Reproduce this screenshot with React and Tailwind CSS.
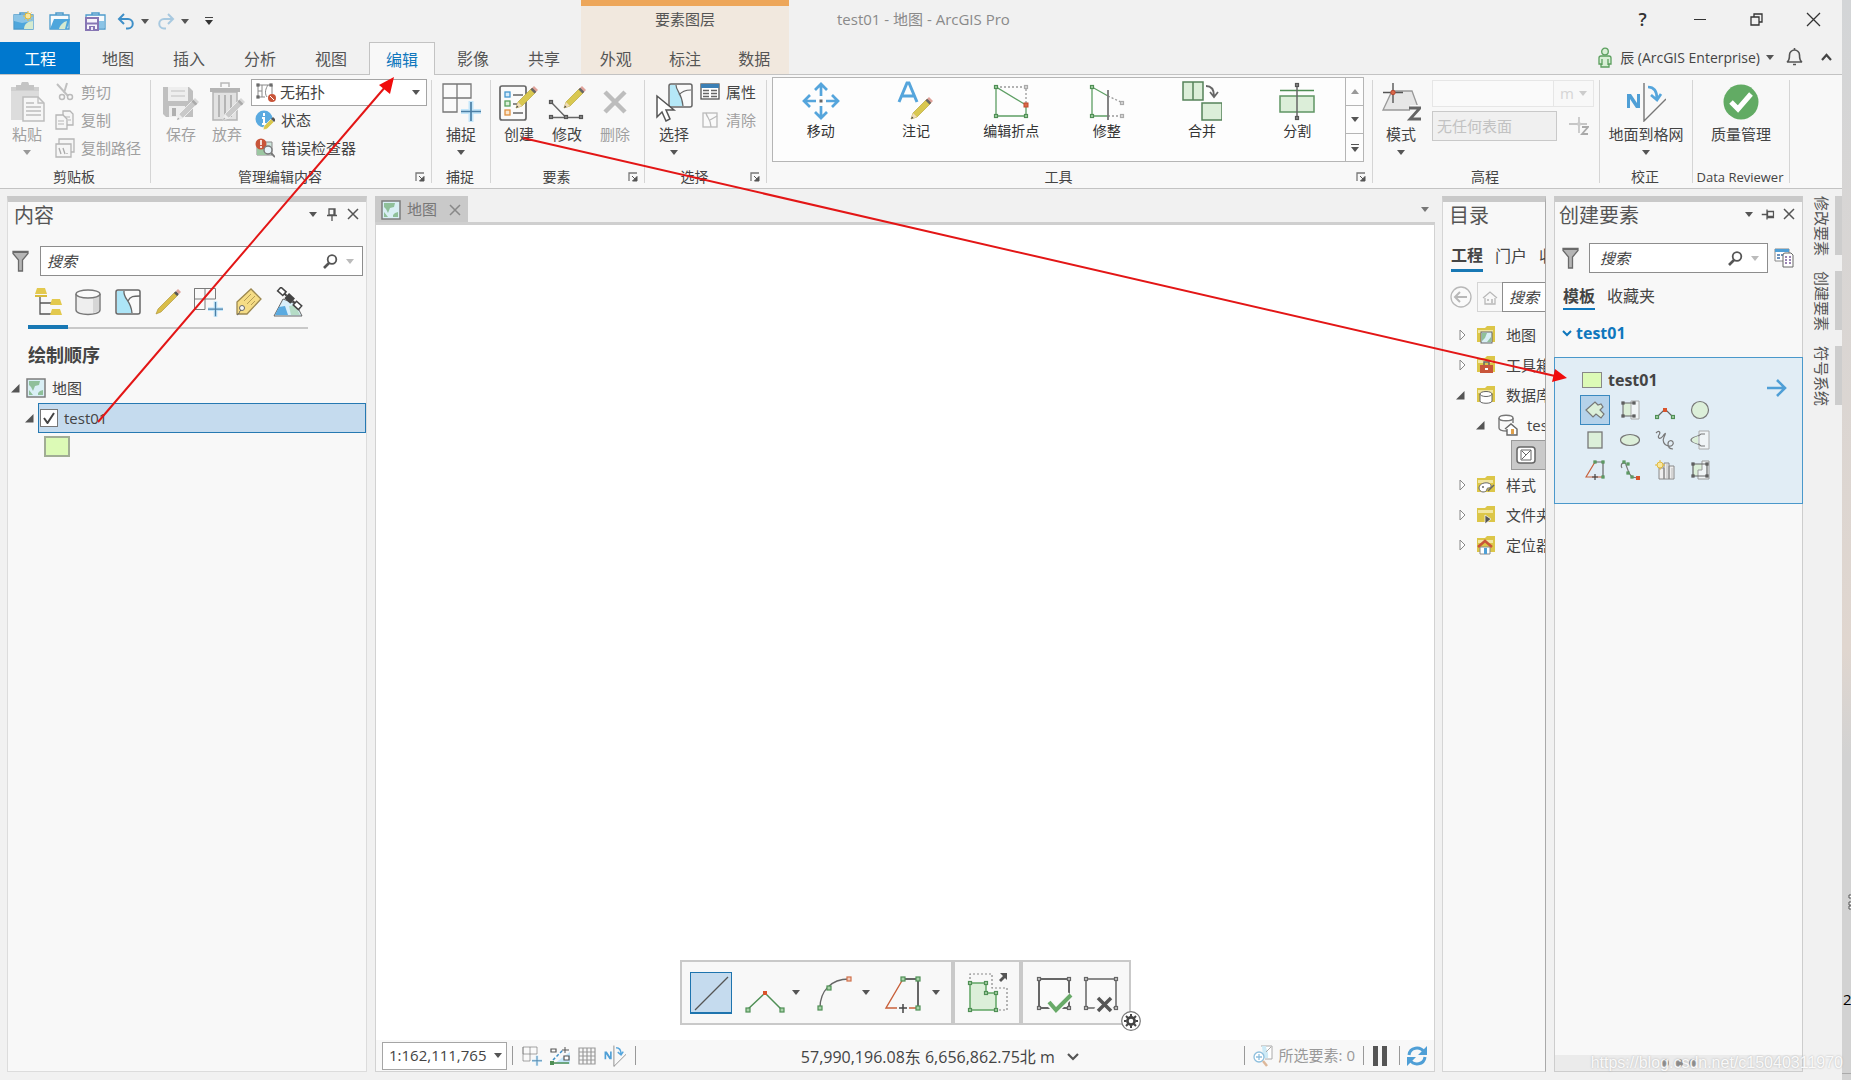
import { useState } from 'react'

// ---------- small shared glyphs ----------

function Caret({ color = '#555' }) {
  return (
    <svg width="8" height="5" viewBox="0 0 8 5" className="shrink-0">
      <path d="M0 0h8L4 5z" fill={color} />
    </svg>
  )
}

function CloseIcon({ size = 12, color = '#555' }) {
  return (
    <svg width={size} height={size} viewBox="0 0 12 12" className="shrink-0">
      <path d="M1 1l10 10M11 1L1 11" stroke={color} strokeWidth="1.500" fill="none" />
    </svg>
  )
}

function PinIcon({ sideways }) {
  return (
    <svg width="12" height="13" viewBox="0 0 12 13" className={sideways ? 'rotate-90' : ''}>
      <path d="M3 1h6v6H3zM8 1v6M1 7.500h10M6 8v5" stroke="#555" strokeWidth="1.300" fill="none" />
    </svg>
  )
}

function FilterIcon() {
  return (
    <svg width="17" height="22" viewBox="0 0 17 22" className="shrink-0">
      <path d="M1 1.500h15v2L10.500 10v11H6.500V10L1 3.500z" fill="#b5b5b5" stroke="#6a6a6a" strokeWidth="1.300" />
      <path d="M1 2h15" stroke="#6a6a6a" strokeWidth="2" />
    </svg>
  )
}

function SearchIcon() {
  return (
    <svg width="15" height="15" viewBox="0 0 15 15" className="shrink-0">
      <circle cx="9" cy="5.500" r="4.300" fill="none" stroke="#555" strokeWidth="1.800" />
      <path d="M6 9l-5 5" stroke="#555" strokeWidth="2.600" />
    </svg>
  )
}

function Launcher() {
  return (
    <button aria-label="对话框" className="shrink-0">
      <svg width="10" height="10" viewBox="0 0 10 10">
        <path d="M1 9V1h8" stroke="#777" strokeWidth="1.300" fill="none" />
        <path d="M4 4l4 4M9 4.500V9H4.500z" stroke="#555" fill="#555" strokeWidth="1" />
      </svg>
    </button>
  )
}

function Pencil({ x = 0, y = 0, gray }) {
  return (
    <g transform={`translate(${x} ${y})`}>
      <path d="M2 18L16 4l4 4L6 22l-6 2z" fill={gray ? '#c9c9c9' : '#d9c850'} stroke={gray ? '#f8f8f8' : '#b9a83c'} strokeWidth="0.700" />
      <path d="M15 5l3-3 4 4-3 3z" fill={gray ? '#d8d8d8' : '#e0a29a'} />
      <path d="M14.500 5.500l1.800-1.800 4 4-1.800 1.800z" fill={gray ? '#aaa' : '#666'} />
      <path d="M2 18l4 4-6 2z" fill={gray ? '#eee' : '#f0dcb8'} />
      <path d="M0 24l2.500-1-1.500-1.500z" fill={gray ? '#aaa' : '#444'} />
    </g>
  )
}

function Dots({ points, color = '#4f8f55', fill = '#a9d3a9', size = 4 }) {
  return points.map(([x, y]) => (
    <rect key={`${x}-${y}`} x={x - size / 2} y={y - size / 2} width={size} height={size} fill={fill} stroke={color} strokeWidth="1.200" />
  ))
}

function MapIcon() {
  return (
    <svg width="20" height="20" viewBox="0 0 20 20" className="shrink-0">
      <rect x="1" y="1" width="18" height="18" fill="#d9eff5" stroke="#7c7c7c" strokeWidth="1.500" />
      <path d="M3 3h11l-1 4-4 1-2 5-2-4-2-2z" fill="#8fc09a" />
      <path d="M3 12l4 5H3zM12 15l2-2 3-1v5h-5z" fill="#8fc09a" />
    </svg>
  )
}

// ---------- quick access bar ----------

function ProjectIcon({ kind }) {
  return (
    <svg width="22" height="20" viewBox="0 0 22 20">
      <path d="M7 4V2h7v2" fill="none" stroke="#4c9bcb" strokeWidth="1.500" />
      <path d="M1 4h19v14H1z" fill={kind === 'new' ? '#4ea6dc' : '#f7fafc'} stroke="#4c9bcb" strokeWidth="1.300" />
      {kind === 'new' && (
        <>
          <path d="M1 4h19v6L9 12 1 10z" fill="#8bc4e6" />
          <path d="M11 18c0-5 4-8 9-8v8z" fill="#d5ead0" />
          <circle cx="15" cy="5" r="3" fill="#f8e7a0" stroke="#e2b93c" />
          <path d="M15 0v1.500M15 8.500V10M10 5h1.500M18.500 5H20M11.500 1.500l1 1M18.500 1.500l-1 1M11.500 8.500l1-1M18.500 8.500l-1-1" stroke="#e2b93c" />
        </>
      )}
      {kind === 'open' && (
        <>
          <path d="M1 18L5 8h16l-3 10z" fill="#4ea6dc" />
          <path d="M10 18c1-4 4-7 8-8l-2 8z" fill="#d5ead0" />
        </>
      )}
      {kind === 'save' && (
        <>
          <path d="M13 10h6v7h-6z" fill="#8bc4e6" />
          <path d="M1 7h12v12H1z" fill="#f7f5fb" stroke="#8776b4" strokeWidth="2" />
          <path d="M1 12.500h12" stroke="#8776b4" strokeWidth="2" />
          <path d="M4 15h6v4H4z" fill="#8776b4" />
          <path d="M6 16h2v3H6z" fill="#efeaf7" />
        </>
      )}
    </svg>
  )
}

function UndoIcon({ flip }) {
  return (
    <svg width="18" height="17" viewBox="0 0 18 17" className={flip ? '-scale-x-100 opacity-40' : ''}>
      <path d="M7 1L2 6l5 5M2.500 6H11a4.500 4.500 0 0 1 0 9.500H9" fill="none" stroke="#3e8fc8" strokeWidth="2" />
    </svg>
  )
}

// ---------- ribbon icons ----------

const big = { width: 40, height: 40, viewBox: '0 0 40 40' }
const small = { width: 20, height: 20, viewBox: '0 0 20 20' }

function PasteIcon() {
  return (
    <svg {...big}>
      <path d="M4 5h28v33H4z" fill="#dcdcdc" />
      <path d="M4 5h28v4H4z" fill="#cfcfcf" />
      <path d="M9 3h5a4 4 0 0 1 8 0h5v5H9z" fill="#c4c4c4" />
      <path d="M16 15h15l6 6v18H16z" fill="#f6f6f6" stroke="#bdbdbd" strokeWidth="1.500" />
      <path d="M31 15v6h6M19 21h8M19 25h15M19 29h15M19 33h15" fill="none" stroke="#bdbdbd" strokeWidth="1.300" />
    </svg>
  )
}

function SaveEditsIcon() {
  return (
    <svg {...big}>
      <path d="M2 5h26l4 4v26H5l-3-3z" fill="#c0c0c0" />
      <path d="M7 5h20v14H7z" fill="#eee" />
      <path d="M10 9h14M10 14h14" stroke="#d0d0d0" strokeWidth="1.500" />
      <path d="M8 24h16v11H8z" fill="#eee" />
      <path d="M11 26h4v8h-4z" fill="#b0b0b0" />
      <Pencil x={16} y={14} gray />
    </svg>
  )
}

function DiscardIcon() {
  return (
    <svg {...big}>
      <path d="M14 5V1h8v4" fill="none" stroke="#b8b8b8" strokeWidth="1.500" />
      <path d="M3 6h30v4H3z" fill="#b4b4b4" />
      <path d="M6 10h24v28H6z" fill="#e2e2e2" stroke="#b4b4b4" strokeWidth="1.500" />
      <path d="M12 13v22M18 13v22M24 13v22" stroke="#b5b5b5" strokeWidth="2" />
      <Pencil x={16} y={14} gray />
    </svg>
  )
}

function SnapIcon({ size = 40 }) {
  return (
    <svg width={size} height={size} viewBox="0 0 40 40">
      <path d="M2 2h28v14H2zM16 2v28H2V2" fill="#fafafa" stroke="#777" strokeWidth="1.300" />
      <path d="M30 19v21M20 29.500h20" stroke="#c4e6fa" strokeWidth="5" />
      <path d="M30 20v19M20 29.500h20" stroke="#4b7fa5" strokeWidth="1.700" />
    </svg>
  )
}

function CreateIcon() {
  return (
    <svg {...big}>
      <rect x="1" y="4" width="26" height="34" rx="2" fill="#fafafa" stroke="#666" strokeWidth="1.700" />
      <rect x="6" y="10" width="5" height="5" fill="#d6ecfa" stroke="#4597cf" strokeWidth="1.300" />
      <rect x="6" y="19" width="5" height="5" fill="#dcf0d8" stroke="#58a05c" strokeWidth="1.300" />
      <rect x="6" y="28" width="5" height="5" fill="#fbe6cc" stroke="#df9140" strokeWidth="1.300" />
      <path d="M14 13h10M14 22h10M14 31h10" stroke="#666" strokeWidth="1.300" />
      <Pencil x={17} y={2} />
    </svg>
  )
}

function ModifyIcon() {
  return (
    <svg {...big}>
      <path d="M4 20l15 15.500M4 35.500h31" stroke="#666" strokeWidth="1.400" fill="none" />
      <Dots points={[[4, 20], [4, 35], [19, 35], [34, 35]]} color="#555" fill="#888" size={3} />
      <Pencil x={17} y={2} />
    </svg>
  )
}

function DeleteIcon() {
  return (
    <svg {...big}>
      <path d="M10 10l20 20M30 10L10 30" stroke="#bdbdbd" strokeWidth="4.500" />
    </svg>
  )
}

function SelectIcon() {
  return (
    <svg {...big}>
      <rect x="15" y="2" width="23" height="23" rx="2" fill="#fafafa" stroke="#666" strokeWidth="1.500" />
      <path d="M16 3h6c0 6 6 8 7 21H16z" fill="#b5e8f7" />
      <path d="M22 3c0 6 6 8 7 21M25 13c3-4 7-5 12-5" fill="none" stroke="#666" strokeWidth="1.200" />
      <path d="M3 14v21l5-5 4 9 4-2-4-9h8z" fill="#fff" stroke="#555" strokeWidth="1.500" />
    </svg>
  )
}

function MoveIcon() {
  return (
    <svg {...big}>
      <g fill="none" stroke="#55a5dc" strokeWidth="2.700">
        <path d="M20 3v12M14 9l6-6 6 6M20 25v12M14 31l6 6 6-6M3 20h12M9 14l-6 6 6 6M25 20h12M31 14l6 6-6 6" />
      </g>
      <rect x="18.500" y="18.500" width="3" height="3" fill="#666" />
    </svg>
  )
}

function AnnotationIcon() {
  return (
    <svg {...big}>
      <path d="M3 21L11 2h2l8 19M6 15h12" fill="none" stroke="#55a5dc" strokeWidth="3" />
      <Pencil x={15} y={14} />
    </svg>
  )
}

function EditVerticesIcon() {
  return (
    <svg {...big}>
      <path d="M5 6h30v18" fill="none" stroke="#999" strokeWidth="1.300" strokeDasharray="2 2" />
      <path d="M5 6v29h30V24z" fill="none" stroke="#5e9f64" strokeWidth="1.300" />
      <Dots points={[[5, 6], [5, 35], [35, 35]]} size={3} />
      <Dots points={[[35, 6]]} color="#aaa" fill="#ddd" size={3} />
      <rect x="33" y="22" width="4" height="4" fill="#d9684a" stroke="#c24a2c" />
    </svg>
  )
}

function TrimIcon() {
  return (
    <svg {...big}>
      <path d="M21 15l15 7M21 35h14" stroke="#999" strokeWidth="1.300" strokeDasharray="2 2" />
      <path d="M21 35H5V6l16 9" fill="none" stroke="#5e9f64" strokeWidth="1.300" />
      <path d="M21 9v30" stroke="#777" strokeWidth="1.800" />
      <Dots points={[[5, 6], [5, 35]]} size={3} />
      <Dots points={[[35, 22], [35, 35]]} color="#aaa" fill="#ddd" size={3} />
    </svg>
  )
}

function MergeIcon() {
  return (
    <svg {...big}>
      <path d="M1 1h20v18H1zM11 1v18M20 22h20v17H20z" fill="#dceed9" stroke="#55835a" strokeWidth="1.500" />
      <path d="M24 5c6 0 8 4 8 10M28 11l4 5 4-5" fill="none" stroke="#666" strokeWidth="1.800" />
    </svg>
  )
}

function SplitIcon() {
  return (
    <svg {...big}>
      <path d="M3 9.500h34" stroke="#4f8f55" strokeWidth="1.500" />
      <rect x="3" y="15" width="34" height="16" fill="#dceed9" stroke="#5f9563" strokeWidth="1.500" />
      <path d="M20 4v34" stroke="#666" strokeWidth="1.500" />
      <Dots points={[[20, 4], [20, 37]]} color="#555" fill="#888" size={3} />
    </svg>
  )
}

function ModeIcon() {
  return (
    <svg {...big}>
      <path d="M11 9h20l7 19H2z" fill="#e6e6e6" stroke="#999" strokeWidth="1.300" />
      <path d="M12 1v20M2 10.500h20" stroke="#555" strokeWidth="1.400" />
      <circle cx="12" cy="10.500" r="2.200" fill="#d9684a" stroke="#b84830" />
      <path d="M29 26h10L30 37h10" fill="none" stroke="#f8f8f8" strokeWidth="6" />
      <path d="M28 26h11L29 37h11" fill="none" stroke="#666" strokeWidth="2.800" />
    </svg>
  )
}

function GridIcon({ size = 40 }) {
  return (
    <svg width={size} height={size} viewBox="0 0 40 40">
      <path d="M1 26V12h4l6 9v-9h3v14h-4l-6-9v9z" fill="#4f9fd6" />
      <path d="M18 1v38l22-22" fill="none" stroke="#777" strokeWidth="1.400" />
      <path d="M22 5c7 0 9 5 9 12M25 13l6 5 4-6" fill="none" stroke="#55a5dc" strokeWidth="2.700" />
    </svg>
  )
}

function QualityIcon() {
  return (
    <svg {...big}>
      <circle cx="20" cy="20" r="17.500" fill="#62ab64" />
      <path d="M10 20l7 7 13-15" fill="none" stroke="#fff" strokeWidth="5" />
    </svg>
  )
}

function CutIcon() {
  return (
    <svg {...small}>
      <path d="M2 2l11 12M12 1L9 11" stroke="#c0c0c0" strokeWidth="2" />
      <circle cx="7" cy="15" r="2.500" fill="none" stroke="#bbb" strokeWidth="1.500" />
      <circle cx="15" cy="15" r="2.500" fill="none" stroke="#bbb" strokeWidth="1.500" />
    </svg>
  )
}

function CopyIcon() {
  return (
    <svg {...small}>
      <path d="M8 1h7l3 3v11H8z" fill="#f6f6f6" stroke="#b5b5b5" strokeWidth="1.300" />
      <path d="M1 5h7l4 4v10H1z" fill="#f6f6f6" stroke="#b5b5b5" strokeWidth="1.300" />
      <path d="M3 11h6M3 14h6M10 7h5M13 10h3" stroke="#b5b5b5" />
    </svg>
  )
}

function CopyPathIcon() {
  return (
    <svg {...small}>
      <path d="M4 1h15v13H4z" fill="#f6f6f6" stroke="#b5b5b5" strokeWidth="1.300" />
      <path d="M1 6h15v13H1z" fill="#f6f6f6" stroke="#b5b5b5" strokeWidth="1.300" />
      <path d="M4 10l2 6M8 10l2 6M12 15v1" stroke="#aaa" strokeWidth="1.300" />
    </svg>
  )
}

function TopologyIcon() {
  return (
    <svg {...small}>
      <path d="M2 2h14v9M2 2v12h7M2 8h4V2M6 8v6M11 14c-3-4-1-9 1-12" fill="none" stroke="#888" />
      <Dots points={[[2, 2], [15, 2], [2, 14]]} color="#666" fill="#888" size={2} />
      <circle cx="16" cy="15" r="4" fill="#c8553a" />
      <path d="M14 13l4 4" stroke="#fff" />
    </svg>
  )
}

function StatusIcon() {
  return (
    <svg {...small}>
      <circle cx="9" cy="9" r="8.500" fill="#5aaae0" />
      <path d="M9 3v3M7 8h2v6M7 14h4" stroke="#fff" strokeWidth="2" fill="none" />
      <path d="M9 16l7-7 3 3-7 7-4 1z" fill="#d9c850" stroke="#fff" strokeWidth="0.600" />
      <path d="M16 9l2-2 3 3-2 2z" fill="#555" />
    </svg>
  )
}

function ErrorInspectorIcon() {
  return (
    <svg {...small}>
      <path d="M2 4h15v13H2z" fill="#cfe6dc" stroke="#888" />
      <path d="M2 10h6l3 7H2z" fill="#9cc7a2" />
      <circle cx="6" cy="6" r="5.500" fill="#c8553a" />
      <path d="M6 2v5M6 8v2" stroke="#fff" strokeWidth="1.600" />
      <circle cx="13" cy="12" r="4" fill="#e9f4fa" stroke="#777" strokeWidth="1.400" />
      <path d="M16 15l4 4" stroke="#777" strokeWidth="1.800" />
    </svg>
  )
}

function AttributesIcon() {
  return (
    <svg {...small}>
      <rect x="1" y="2" width="18" height="15" fill="#fff" stroke="#555" strokeWidth="1.300" />
      <path d="M1 2h18v4H1z" fill="#3b7fb5" />
      <path d="M3 8.500h6M11 8.500h6M3 11.500h6M11 11.500h6M3 14.500h6M11 14.500h6" stroke="#666" strokeWidth="1.500" />
    </svg>
  )
}

function ClearIcon() {
  return (
    <svg {...small}>
      <rect x="3" y="3" width="14" height="14" fill="#fafafa" stroke="#bbb" strokeWidth="1.300" />
      <path d="M6 3c1 5 5 6 5 14M10 10l7-4" fill="none" stroke="#bbb" strokeWidth="1.300" />
    </svg>
  )
}

// ---------- ribbon ----------

function BigButton({ icon, label, width = 'w-10', disabled, menu }) {
  return (
    <button disabled={disabled} className={`${width} shrink-0 flex flex-col items-center`}>
      {icon}
      <span className={`text-[15px] leading-5 mt-0.5 whitespace-nowrap ${disabled ? 'text-[#a0a0a0]' : 'text-[#444]'}`}>{label}</span>
      {menu && <span className="mt-1.5"><Caret color={disabled ? '#999' : '#555'} /></span>}
    </button>
  )
}

function SmallButton({ icon, label, disabled }) {
  return (
    <button disabled={disabled} className={`flex items-center gap-1.5 h-7 text-[15px] whitespace-nowrap ${disabled ? 'text-[#a0a0a0]' : 'text-[#444]'}`}>
      {icon}
      <span>{label}</span>
    </button>
  )
}

function Group({ label, width, launcher, labelSize = 'text-[14px]', children }) {
  return (
    <section className={`${width} shrink-0 h-[103px] mt-[5px] border-r border-[#d5d5d5] flex flex-col justify-between`}>
      <div className="flex">{children}</div>
      <div className={`flex items-center gap-1.5 h-[22px] -mb-1.5 pb-0.5 ${launcher ? 'pr-1.5' : 'pr-0.5'}`}>
        <h2 className={`flex-1 text-center ${labelSize} whitespace-nowrap text-[#444] leading-5`}>{label}</h2>
        {launcher && <Launcher />}
      </div>
    </section>
  )
}

const galleryTools = [
  ['移动', MoveIcon],
  ['注记', AnnotationIcon],
  ['编辑折点', EditVerticesIcon],
  ['修整', TrimIcon],
  ['合并', MergeIcon],
  ['分割', SplitIcon],
]

function Ribbon() {
  return (
    <div className="h-[114px] shrink-0 flex bg-[#f8f8f8] border-b border-[#c3c3c3] overflow-hidden">
      <Group label="剪贴板" width="w-[151px]">
        <div className="flex pl-[7px] gap-2">
          <div className="pt-0.5"><BigButton icon={<PasteIcon />} label="粘贴" disabled menu /></div>
          <div className="-mt-0.5">
            <SmallButton icon={<CutIcon />} label="剪切" disabled />
            <SmallButton icon={<CopyIcon />} label="复制" disabled />
            <SmallButton icon={<CopyPathIcon />} label="复制路径" disabled />
          </div>
        </div>
      </Group>

      <Group label="管理编辑内容" width="w-[281px]" launcher>
        <div className="flex pl-2.5 gap-1.5 pt-0.5">
          <BigButton icon={<SaveEditsIcon />} label="保存" disabled />
          <BigButton icon={<DiscardIcon />} label="放弃" disabled />
        </div>
        <div className="flex-1 -mt-px ml-1 mr-1">
          <div className="h-[27px] flex items-center gap-1 pl-1 pr-1.5 bg-white border border-[#a5a5a5]">
            <TopologyIcon />
            <select aria-label="拓扑" className="flex-1 appearance-none bg-transparent text-[15px] text-[#444] outline-none">
              <option>无拓扑</option>
            </select>
            <Caret />
          </div>
          <div className="pl-1">
            <SmallButton icon={<StatusIcon />} label="状态" />
            <SmallButton icon={<ErrorInspectorIcon />} label="错误检查器" />
          </div>
        </div>
      </Group>

      <Group label="捕捉" width="w-[59px]">
        <div className="pl-[9px] pt-0.5"><BigButton icon={<SnapIcon />} label="捕捉" menu /></div>
      </Group>

      <Group label="要素" width="w-[154px]" launcher>
        <div className="flex pl-2 gap-2 pt-0.5">
          <BigButton icon={<CreateIcon />} label="创建" />
          <BigButton icon={<ModifyIcon />} label="修改" />
          <BigButton icon={<DeleteIcon />} label="删除" disabled />
        </div>
      </Group>

      <Group label="选择" width="w-[122px]" launcher>
        <div className="pl-[9px] pt-0.5"><BigButton icon={<SelectIcon />} label="选择" menu /></div>
        <div className="-mt-0.5 pl-1.5">
          <SmallButton icon={<AttributesIcon />} label="属性" />
          <SmallButton icon={<ClearIcon />} label="清除" disabled />
        </div>
      </Group>

      <Group label="工具" width="w-[606px]" launcher>
        <div className="-mt-[3px] ml-[5px] w-[592px] h-[85px] flex border border-[#b5b5b5] bg-[#fdfdfd]">
          <div className="flex-1 grid grid-cols-6">
            {galleryTools.map(([name, ToolIcon]) => (
              <button key={name} className="flex flex-col items-center pt-[3px]">
                <ToolIcon />
                <span className="text-[14px] leading-5 text-[#333]">{name}</span>
              </button>
            ))}
          </div>
          <div className="w-[18px] flex flex-col border-l border-[#b5b5b5] divide-y divide-[#b5b5b5]">
            <button aria-label="上一行" className="flex-1 flex items-center justify-center"><span className="rotate-180 flex"><Caret color="#999" /></span></button>
            <button aria-label="下一行" className="flex-1 flex items-center justify-center"><Caret /></button>
            <button aria-label="更多工具" className="flex-1 flex flex-col gap-0.5 items-center justify-center">
              <span className="w-2 h-px bg-[#555]" />
              <Caret />
            </button>
          </div>
        </div>
      </Group>

      <Group label="高程" width="w-[227px]">
        <div className="pl-2 pt-0.5"><BigButton icon={<ModeIcon />} label="模式" menu /></div>
        <div className="pl-[11px] flex flex-col gap-1">
          <div className="flex h-[27px] w-[162px] border border-[#e6e6e6]">
            <input aria-label="高程值" disabled className="w-[121px] bg-[#fafafa] border-r border-[#e6e6e6]" />
            <select aria-label="单位" disabled className="flex-1 appearance-none pl-1.5 text-[15px] text-[#d5d5d5]">
              <option>m</option>
            </select>
            <span className="flex items-center pr-1.5"><Caret color="#ccc" /></span>
          </div>
          <div className="flex items-center gap-3">
            <select aria-label="高程表面" disabled className="w-[125px] h-[30px] appearance-none border border-[#c9c9c9] bg-[#f0f0f0] pl-1 text-[15px] text-[#c2c2c2]">
              <option>无任何表面</option>
            </select>
            <svg {...small}>
              <path d="M10 1v16M0 8h18" stroke="#b5b5b5" strokeWidth="1.300" />
              <circle cx="10" cy="8" r="2" fill="#ccc" />
              <path d="M13 11h6l-6 7h6" fill="none" stroke="#aaa" strokeWidth="1.800" />
            </svg>
          </div>
        </div>
      </Group>

      <Group label="校正" width="w-[93px]">
        <div className="pt-0.5 flex-1"><BigButton icon={<GridIcon />} label="地面到格网" width="w-full" menu /></div>
      </Group>

      <Group label="Data Reviewer" width="w-[97px]" labelSize="text-[13px]">
        <div className="pt-0.5 flex-1"><BigButton icon={<QualityIcon />} label="质量管理" width="w-full" /></div>
      </Group>
    </div>
  )
}

// ---------- title bar and tabs ----------

const tabs = ['地图', '插入', '分析', '视图', '编辑', '影像', '共享']

function Header() {
  const [active, setActive] = useState('编辑')
  return (
    <header className="h-[75px] shrink-0 flex border-b border-[#c3c3c3] bg-[#f1f1f1]">
      <div className="w-[581px] shrink-0 flex flex-col">
        <div className="h-[42px] flex items-center pl-[13px] gap-3.5">
          <button aria-label="新建工程"><ProjectIcon kind="new" /></button>
          <button aria-label="打开工程"><ProjectIcon kind="open" /></button>
          <button aria-label="保存工程"><ProjectIcon kind="save" /></button>
          <button aria-label="撤消" className="flex items-center gap-1.5 -ml-1"><UndoIcon /><Caret /></button>
          <button aria-label="恢复" className="flex items-center gap-1.5 -ml-1.5"><UndoIcon flip /><Caret /></button>
          <button aria-label="自定义快速访问工具栏" className="ml-0.5 flex flex-col items-center gap-0.5">
            <span className="w-2 h-px bg-[#444]" />
            <Caret color="#333" />
          </button>
        </div>
        <nav className="h-8 flex gap-[5px] text-[16px] text-[#555]">
          <button className="w-[80px] pt-0.5 bg-[#0078ce] text-white">工程</button>
          {tabs.map(tab => (
            <button
              key={tab}
              onClick={() => setActive(tab)}
              className={`w-[66px] pt-0.5 ${tab === active ? 'h-[33px] bg-[#f8f8f8] border border-b-0 border-[#c3c3c3] text-[#0f77bd]' : ''}`}
            >
              {tab}
            </button>
          ))}
        </nav>
      </div>

      <div className="w-[208px] shrink-0 flex flex-col bg-[#f1e8de] border-t-6 border-[#eda659] text-[#555]">
        <p className="h-9 pt-0.5 text-center text-[15px]">要素图层</p>
        <div className="h-8 grid grid-cols-3 text-[16px]">
          <button className="pt-0.5">外观</button>
          <button className="pt-0.5">标注</button>
          <button className="pt-0.5">数据</button>
        </div>
      </div>

      <div className="flex-1 flex flex-col">
        <div className="h-[38px] mb-0.5 flex items-center justify-between pl-12">
          <h1 className="text-[15px] text-[#8a8a8a]">test01 - 地图 - ArcGIS Pro</h1>
          <div className="flex items-center text-[#333]">
            <button className="w-[57px] text-[18px] leading-6 font-semibold">?</button>
            <button aria-label="最小化" className="w-[57px] flex justify-center"><span className="w-3 h-px bg-[#333]" /></button>
            <button aria-label="还原" className="w-[57px] flex justify-center">
              <svg width="13" height="13" viewBox="0 0 13 13">
                <path d="M1 4h8v8H1zM4 4V1h8v8H9" fill="none" stroke="#333" strokeWidth="1.300" />
              </svg>
            </button>
            <button aria-label="关闭" className="w-[57px] flex justify-center">
              <svg width="15" height="15" viewBox="0 0 15 15"><path d="M1 1l13 13M14 1L1 14" stroke="#333" strokeWidth="1.300" /></svg>
            </button>
          </div>
        </div>
        <div className="h-[34px] flex items-center justify-end pr-2.5 text-[#444]">
          <svg width="14" height="21" viewBox="0 0 14 21" className="mr-2">
            <circle cx="7" cy="4.500" r="3.300" fill="#d9efd6" stroke="#5b9f5e" strokeWidth="1.300" />
            <path d="M1 11a2 2 0 0 1 2-2h8a2 2 0 0 1 2 2v6h-2v3H3v-3H1zM4 12v6M10 12v6" fill="#d9efd6" stroke="#5b9f5e" strokeWidth="1.300" />
          </svg>
          <button className="flex items-center gap-1.5 text-[14px]">辰 (ArcGIS Enterprise) <Caret /></button>
          <button aria-label="通知" className="ml-3">
            <svg width="17" height="20" viewBox="0 0 17 20">
              <path d="M1 15c2-1 2.500-3 2.500-7a5 5 0 0 1 10 0c0 4 .5 6 2.500 7zM7 17.500h3M8.500 1v2" fill="none" stroke="#555" strokeWidth="1.600" />
            </svg>
          </button>
          <button aria-label="折叠功能区" className="ml-[18px]">
            <svg width="11" height="8" viewBox="0 0 11 8"><path d="M1 7l4.500-5L10 7" fill="none" stroke="#444" strokeWidth="2.200" /></svg>
          </button>
        </div>
      </div>
    </header>
  )
}

// ---------- contents pane ----------

function SearchBox({ label, inset = 'pl-1.5' }) {
  return (
    <label className="min-w-0 flex-1 h-[30px] flex items-center gap-2 pr-2 bg-white border border-[#8d8d8d]">
      <input aria-label={label} placeholder="搜索" className={`min-w-0 flex-1 ${inset} text-[15px] italic placeholder-[#444] outline-none`} />
      <SearchIcon />
      <Caret color="#bbb" />
    </label>
  )
}

function PaneControls({ sideways }) {
  return (
    <div className="flex items-center gap-[9px] pb-1">
      <button aria-label="窗格菜单"><Caret /></button>
      <button aria-label="自动隐藏"><PinIcon sideways={sideways} /></button>
      <button aria-label="关闭窗格"><CloseIcon /></button>
    </div>
  )
}

function Expanded() {
  return (
    <svg width="9" height="9" viewBox="0 0 9 9" className="shrink-0"><path d="M8.500 0v8.500H0z" fill="#555" /></svg>
  )
}

function Collapsed() {
  return (
    <svg width="8" height="12" viewBox="0 0 8 12" className="shrink-0"><path d="M1 1l5 5-5 5z" fill="#fff" stroke="#888" /></svg>
  )
}

const listIcons = [
  ['按绘制顺序列出', (
    <svg width="30" height="30" viewBox="0 0 30 30">
      <path d="M7 9v18h12M7 16h12" fill="none" stroke="#555" strokeWidth="1.300" />
      <path d="M4 1h8l2 6H2zM19 12h8l2 6H17zM19 22h8l2 6H17z" fill="#e3c94e" />
      <path d="M2 8h12v2H2z" fill="#d8bb3c" />
    </svg>
  )],
  ['按数据源列出', (
    <svg width="30" height="30" viewBox="0 0 30 30">
      <path d="M3 7v16c0 6 24 6 24 0V7" fill="#eee" stroke="#777" strokeWidth="1.400" />
      <path d="M20 9h6v15l-6 2z" fill="#d6d6d6" />
      <ellipse cx="15" cy="7" rx="12" ry="4" fill="#fafafa" stroke="#777" strokeWidth="1.400" />
    </svg>
  )],
  ['按选择列出', (
    <svg width="30" height="30" viewBox="0 0 30 30">
      <rect x="3" y="3" width="24" height="24" rx="2" fill="#fafafa" stroke="#666" strokeWidth="1.500" />
      <path d="M4 4h7c-1 8 7 9 8 22H4z" fill="#ade5f7" />
      <path d="M11 4c-1 8 7 9 8 22M15 14c2-5 6-5 12-5" fill="none" stroke="#666" strokeWidth="1.300" />
    </svg>
  )],
  ['按编辑列出', (
    <svg width="30" height="30" viewBox="0 0 30 30">
      <path d="M5 22L22 5l3 3L8 25l-5 2z" fill="#d9bd48" stroke="#a98f30" strokeWidth="0.600" />
      <path d="M21 6l2-2 3 3-2 2z" fill="#555" />
      <path d="M23 4l2-2 3 3-2 2z" fill="#e0a29a" />
    </svg>
  )],
  ['按捕捉列出', <SnapIcon size={30} />],
  ['按标注列出', (
    <svg width="30" height="30" viewBox="0 0 30 30">
      <path d="M4 15L18 2l10 10-14 15H4z" fill="#f5dc85" stroke="#9c8850" strokeWidth="1.300" />
      <path d="M11 14l7-7M14 17l8-8M18 18l4-4" stroke="#b59d56" />
      <circle cx="9" cy="21" r="2.500" fill="#f8f8f8" stroke="#666" />
      <path d="M8 23c-2 1-1 4-4 5" fill="none" stroke="#666" />
    </svg>
  )],
  ['按感知影像列出', (
    <svg width="30" height="30" viewBox="0 0 30 30">
      <path d="M10 12L1 29h28l-6-12z" fill="#d9effa" stroke="#666" />
      <path d="M6 20l6-1 3 9H2z" fill="#5aaae0" />
      <path d="M16 19l6-1 5 10h-9z" fill="#b5dcc6" />
      <g transform="rotate(42 17 11)">
        <path d="M13 8h8v7h-8z" fill="#444" />
        <path d="M3 9h7v5H3zM24 9h7v5h-7z" fill="#fff" stroke="#444" strokeWidth="1.500" />
        <path d="M10 11.500h3M21 11.500h3" stroke="#444" strokeWidth="2" />
      </g>
    </svg>
  )],
]

function Contents() {
  const [visible, setVisible] = useState(true)
  return (
    <aside className="w-[360px] shrink-0 flex flex-col bg-[#f8f8f8] border border-[#dcdcdc] border-t-6 border-t-[#c9c9c9] text-[#444]">
      <div className="flex items-center justify-between pl-1.5 pr-[7px] h-7">
        <h2 className="text-[20px] leading-7 text-[#555]">内容</h2>
        <PaneControls />
      </div>
      <div className="mt-4 flex items-center pl-1 pr-[3px] gap-[11px]">
        <FilterIcon />
        <SearchBox label="搜索内容" />
      </div>
      <div className="mt-2.5 ml-5 w-[280px] flex">
        {listIcons.map(([name, icon], i) => (
          <button
            key={name}
            aria-label={name}
            className={`w-10 h-[43px] flex justify-center pt-px ${i === 0 ? 'border-b-4 border-[#1878b4]' : 'border-b-2 border-[#c9c9c9]'}`}
          >
            {icon}
          </button>
        ))}
      </div>
      <h3 className="mt-3 ml-5 text-[18px] leading-7 font-bold">绘制顺序</h3>
      <div className="mt-1 h-[30px] flex items-center pl-[3px] gap-1.5 text-[15px]">
        <Expanded />
        <MapIcon />
        <span>地图</span>
      </div>
      <div className="flex items-center pl-[17px] gap-1">
        <Expanded />
        <label className="flex-1 h-[30px] flex items-center gap-1.5 pl-px bg-[#c5dbee] border border-[#2679b2] text-[15px]">
          <input type="checkbox" checked={visible} onChange={e => setVisible(e.target.checked)} className="sr-only" />
          <span className="size-[18px] flex items-center justify-center bg-white border border-[#777]">
            {visible && <svg width="12" height="12" viewBox="0 0 12 12"><path d="M1 6l3.500 5L11 1" fill="none" stroke="#444" strokeWidth="2" /></svg>}
          </span>
          test01
        </label>
      </div>
      <span className="mt-[3px] ml-9 w-[26px] h-[21px] bg-[#dcfab6] border-2 border-[#a1ad95]" />
    </aside>
  )
}

// ---------- map view ----------

function ToolbarDivider() {
  return <span className="w-1 self-stretch bg-[#c9c9c9]" />
}

function EditToolbar() {
  return (
    <div className="relative h-[65px] flex items-center bg-[#f8f8f8] border-2 border-[#c9c9c9]">
      <button aria-label="直线" className="ml-2 size-[42px] bg-[#c5dbee] border border-b-2 border-[#1e74ae]">
        <svg width="40" height="40" viewBox="0 0 40 40"><path d="M4 37L37 4" stroke="#555" strokeWidth="1.300" /></svg>
      </button>
      <button aria-label="直角" className="ml-[13px] flex items-center gap-[7px]">
        <svg width="40" height="40" viewBox="0 0 40 40">
          <path d="M2 37l18-17 17 17" fill="none" stroke="#4f8f55" strokeWidth="1.500" />
          <Dots points={[[3, 37], [37, 37]]} />
          <rect x="18" y="18" width="4" height="4" fill="#d9542c" />
        </svg>
        <Caret />
      </button>
      <button aria-label="弧段" className="ml-3 flex items-center gap-2.5">
        <svg width="40" height="40" viewBox="0 0 40 40">
          <path d="M8 35C8 18 19 6 37 6" fill="none" stroke="#666" strokeWidth="1.400" />
          <Dots points={[[8, 35], [17, 15]]} />
          <Dots points={[[37, 6]]} color="#d0704a" fill="#f3cfc0" />
        </svg>
        <Caret />
      </button>
      <button aria-label="追踪" className="ml-3 flex items-center gap-2.5">
        <svg width="40" height="40" viewBox="0 0 40 40">
          <path d="M21 6h15v29" fill="none" stroke="#666" strokeWidth="2" />
          <path d="M21 6L4 35h32" fill="none" stroke="#c8603a" strokeWidth="1.400" />
          <path d="M15 35h12" stroke="#f8f8f8" strokeWidth="3" />
          <path d="M21 31v9M17 35h8" stroke="#444" strokeWidth="1.500" />
          <Dots points={[[21, 6], [36, 6], [36, 35]]} />
        </svg>
        <Caret />
      </button>
      <span className="w-[11px]" />
      <ToolbarDivider />
      <button aria-label="绝对值" className="mx-[11px]">
        <svg width="42" height="42" viewBox="0 0 42 42">
          <path d="M4 11V2h22v14h15v22h-8" fill="none" stroke="#888" strokeWidth="1.200" strokeDasharray="2 2" />
          <path d="M4 11h16v10h10v17H4z" fill="#dcefd9" stroke="#5fa563" strokeWidth="1.500" />
          <Dots points={[[4, 11], [20, 11], [20, 21], [30, 21], [30, 38], [4, 38]]} size={3} />
          <path d="M34 1h7v7l-2-2-4 4-2-2 4-4z" fill="#555" />
        </svg>
      </button>
      <ToolbarDivider />
      <button aria-label="完成" className="ml-3">
        <svg width="38" height="40" viewBox="0 0 38 40">
          <path d="M4 6h30v29H4z" fill="#fafafa" stroke="#666" strokeWidth="2" />
          <Dots points={[[4, 6], [34, 6], [4, 35], [34, 35]]} color="#666" fill="#ccc" size={3} />
          <path d="M14 30l7 7 15-15" fill="none" stroke="#f8f8f8" strokeWidth="7" />
          <path d="M14 29l7 8 15-15" fill="none" stroke="#68aa68" strokeWidth="4" />
        </svg>
      </button>
      <button aria-label="取消" className="mx-[9px]">
        <svg width="38" height="40" viewBox="0 0 38 40">
          <path d="M4 6h30v29H4z" fill="#fafafa" stroke="#666" strokeWidth="1.500" />
          <Dots points={[[4, 6], [34, 6], [4, 35], [34, 35]]} color="#666" fill="#ccc" size={3} />
          <path d="M15 24l14 14M29 24L15 38" stroke="#f8f8f8" strokeWidth="8" />
          <path d="M16 25l13 13M29 25L16 38" stroke="#555" strokeWidth="3.500" />
        </svg>
      </button>
      <button aria-label="工具条设置" className="absolute -right-3 -bottom-2">
        <svg width="20" height="20" viewBox="0 0 20 20">
          <circle cx="10" cy="10" r="9.300" fill="#fff" stroke="#777" strokeWidth="1.200" />
          <circle cx="10" cy="10" r="3.600" fill="none" stroke="#444" strokeWidth="2.600" />
          <path d="M10 3v2.500M10 14.500V17M3 10h2.500M14.500 10H17M5 5l2 2M13 13l2 2M15 5l-2 2M7 13l-2 2" stroke="#444" strokeWidth="2" />
        </svg>
      </button>
    </div>
  )
}

function Bar() {
  return <span className="w-px h-[19px] bg-[#999]" />
}

function StatusBar() {
  return (
    <footer className="h-[31px] shrink-0 flex items-center justify-between bg-[#f8f8f8] pl-1.5 pr-[7px] text-[#444]">
      <div className="flex items-center">
        <div className="w-[125px] h-7 flex items-center pl-1.5 pr-1 gap-1 bg-white border border-[#a5a5a5] mr-[5px]">
          <select aria-label="比例尺" className="min-w-0 flex-1 appearance-none bg-transparent text-[15px] outline-none overflow-hidden">
            <option>1:162,111,765</option>
          </select>
          <Caret />
        </div>
        <Bar />
        <div className="flex items-center gap-2 px-[9px]">
          <button aria-label="捕捉"><SnapIcon size={20} /></button>
          <button aria-label="约束">
            <svg {...small}>
              <path d="M5 17L20 6v12H3z" fill="#c4e6fa" />
              <path d="M1 3h5v3H1zM14 10h5v4h-5z" fill="#fff" stroke="#555" strokeWidth="1.200" />
              <path d="M3 14L13 4" stroke="#3e8fc8" strokeDasharray="3 2" strokeWidth="1.500" />
              <path d="M15 1v6M12 4h7" stroke="#555" />
              <path d="M2 17h17" stroke="#4f8f55" strokeWidth="1.500" />
              <rect x="0" y="15" width="4" height="4" fill="#4f8f55" />
            </svg>
          </button>
          <button aria-label="格网">
            <svg width="18" height="18" viewBox="0 0 18 18">
              <path d="M1 1h16v16H1zM1 5h16M1 9h16M1 13h16M5 1v16M9 1v16M13 1v16" fill="none" stroke="#999" strokeWidth="1.200" />
            </svg>
          </button>
          <button aria-label="地面到格网校正"><GridIcon size={22} /></button>
        </div>
        <Bar />
      </div>
      <button className="flex items-center gap-3 pt-0.5 text-[16px]">
        57,990,196.08东 6,656,862.75北 m
        <svg width="12" height="8" viewBox="0 0 12 8"><path d="M1 1l5 5 5-5" fill="none" stroke="#555" strokeWidth="2.200" /></svg>
      </button>
      <div className="flex items-center text-[15px] text-[#999]">
        <Bar />
        <svg width="20" height="22" viewBox="0 0 20 22" className="ml-2 mr-1.5">
          <path d="M8 1h11v13h-7" fill="#fff" stroke="#aaa" />
          <path d="M9 1h4c0 4 3 6 2 12h-5z" fill="#cdeaf6" />
          <path d="M13 7l5-5" stroke="#aaa" />
          <circle cx="6" cy="12" r="5" fill="#fff" stroke="#8ebfdd" strokeWidth="1.300" />
          <path d="M6 9v6M3 12h6" stroke="#8ebfdd" strokeWidth="1.300" />
          <path d="M10 16l4 5" stroke="#ddb89a" strokeWidth="2.500" />
        </svg>
        <span className="mr-2">所选要素: 0</span>
        <Bar />
        <button aria-label="暂停绘制" className="ml-[9px] mr-3 flex gap-1">
          <span className="w-[5px] h-5 bg-[#555]" />
          <span className="w-[5px] h-5 bg-[#555]" />
        </button>
        <Bar />
        <button aria-label="刷新" className="ml-[7px]">
          <svg width="20" height="22" viewBox="0 0 20 22">
            <path d="M2 10c1-8 11-9 15-3M18 12c-1 8-11 9-15 3" fill="none" stroke="#4f9fd6" strokeWidth="3" />
            <path d="M20 1v9h-9zM0 21v-9h9z" fill="#4f9fd6" />
          </svg>
        </button>
      </div>
    </footer>
  )
}

function MapView() {
  return (
    <main className="flex-1 min-w-0 flex flex-col">
      <div className="h-[26px] shrink-0 flex items-center justify-between pr-1.5">
        <div className="h-[26px] w-[93px] pt-px flex items-center gap-1.5 pl-1.5 bg-[#c9c9c9] text-[15px] text-[#777]">
          <MapIcon />
          <span className="flex-1">地图</span>
          <button aria-label="关闭地图" className="mr-[7px]"><CloseIcon color="#888" /></button>
        </div>
        <button aria-label="活动视图"><Caret color="#777" /></button>
      </div>
      <div className="flex-1 flex flex-col border border-[#d2d2d2] border-t-3 border-t-[#cfcfcf] bg-white">
        <div className="flex-1 flex items-end justify-center pb-[15px]">
          <EditToolbar />
        </div>
        <StatusBar />
      </div>
    </main>
  )
}

// ---------- catalog pane ----------

function Folder({ children }) {
  return (
    <svg width="20" height="20" viewBox="0 0 20 20" className="shrink-0">
      <path d="M1 3h8l2-2h8v16H1z" fill="#dcc648" />
      <path d="M2 5h15v3H2z" fill="#f1e6a0" />
      {children}
    </svg>
  )
}

const catalogRows = [
  ['地图', <Folder key="m"><rect x="5" y="7" width="11" height="11" fill="#d9eff5" stroke="#666" /><path d="M6 8h5l-2 5-3 3zM11 17l4-5v5z" fill="#8fc09a" /></Folder>],
  ['工具箱', <Folder key="t"><path d="M4 10h13v8H4z" fill="#c8553a" /><path d="M8 10V7h5v3" fill="none" stroke="#666" strokeWidth="1.500" /><path d="M9 13h3v2H9z" fill="#fff" /></Folder>],
  ['数据库', <Folder key="d"><path d="M4 9v7c0 3 12 3 12 0V9" fill="#fff" stroke="#666" /><ellipse cx="10" cy="9" rx="6" ry="2.500" fill="#fff" stroke="#666" /></Folder>],
  ['test01', null],
  ['', null],
  ['样式', <Folder key="s"><path d="M3 13c0-6 12-7 12-2 0 3-4 1-4 3s-2 3-4 3-4-2-4-4z" fill="#fff" stroke="#666" /><path d="M12 16l6-6" stroke="#666" strokeWidth="1.500" /><circle cx="7" cy="12" r="1" fill="#666" /></Folder>],
  ['文件夹', <Folder key="f"><path d="M9 10l6 4-6 5z" fill="#555" stroke="#fff" strokeWidth="0.700" /></Folder>],
  ['定位器', <Folder key="l"><path d="M4 12h10v7H4z" fill="#fff" stroke="#888" /><path d="M2 12l7-6 7 6" fill="none" stroke="#c8553a" strokeWidth="2.500" /><path d="M8 13h3v6H8z" fill="#4f9fd6" /></Folder>],
]

function CatalogRow({ index, name, icon }) {
  if (index === 3) {
    return (
      <li className="h-[30px] flex items-center pl-[33px]">
        <Expanded />
        <svg width="22" height="22" viewBox="0 0 22 22" className="ml-3 mr-2 shrink-0">
          <path d="M2 4v10c0 3 6 3 8 3M16 4v5" fill="none" stroke="#777" strokeWidth="1.400" />
          <ellipse cx="9" cy="4" rx="7" ry="2.800" fill="#fff" stroke="#777" strokeWidth="1.400" />
          <path d="M8 15l6-5 6 5v6H10v-6" fill="#fff" stroke="#666" strokeWidth="1.400" />
          <path d="M14 15h3v5h-3z" fill="#dfa04a" />
        </svg>
        {name}
      </li>
    )
  }
  if (index === 4) {
    return (
      <li className="h-[30px] flex items-center ml-[68px] pl-1 bg-[#c9c9c9] border border-r-0 border-[#999]">
        <svg width="20" height="18" viewBox="0 0 20 18" className="shrink-0">
          <rect x="1" y="1" width="18" height="16" rx="3" fill="#fff" stroke="#666" strokeWidth="1.500" />
          <path d="M5 4h10v10H5zM6 5l4 4 5-5M10 9l-4 4" fill="none" stroke="#666" />
        </svg>
      </li>
    )
  }
  return (
    <li className={`h-[30px] flex items-center ${index === 2 ? 'pl-[13px]' : 'pl-4'}`}>
      <span className={`${index === 2 ? 'w-5' : 'w-[17px]'} shrink-0 flex`}>{index === 2 ? <Expanded /> : <Collapsed />}</span>
      {icon}
      <span className="ml-2.5">{name}</span>
    </li>
  )
}

function Catalog() {
  return (
    <aside className="w-[104px] shrink-0 flex flex-col overflow-hidden whitespace-nowrap bg-[#f8f8f8] border border-[#d5d5d5] border-r-[#aaa] border-t-6 border-t-[#c9c9c9] text-[#444]">
      <h2 className="pl-1.5 text-[20px] leading-7 text-[#555]">目录</h2>
      <div className="mt-[13px] pl-2 flex gap-3 text-[16px] leading-6">
        <button className="shrink-0 h-[29px] pb-[3px] font-bold border-b-3 border-[#1878b4]">工程</button>
        <button className="shrink-0 h-[26px]">门户</button>
        <button className="shrink-0 h-[26px]">收藏夹</button>
      </div>
      <div className="mt-2.5 pl-[7px] flex items-center">
        <button aria-label="后退" className="shrink-0">
          <svg width="22" height="22" viewBox="0 0 22 22">
            <circle cx="11" cy="11" r="10" fill="#fafafa" stroke="#b8b8b8" strokeWidth="1.300" />
            <path d="M17 11H6M10 6l-5 5 5 5" fill="none" stroke="#b8b8b8" strokeWidth="2" />
          </svg>
        </button>
        <button aria-label="主目录" className="ml-[5px] shrink-0 w-[25px] h-[30px] flex items-center justify-center border border-r-0 border-[#d5d5d5]">
          <svg width="16" height="15" viewBox="0 0 16 15">
            <path d="M1 8l7-6 7 6M3 8v6h10V8" fill="none" stroke="#b8b8b8" strokeWidth="1.300" />
            <path d="M5 9h2v2H5zM9 9h2v5H9z" fill="#c5c5c5" />
          </svg>
        </button>
        <input aria-label="搜索工程" placeholder="搜索" className="shrink-0 w-[120px] h-[30px] pl-1.5 bg-white border border-[#8d8d8d] text-[15px] italic placeholder-[#444] outline-none" />
      </div>
      <ul className="mt-2 text-[15px]">
        {catalogRows.map(([name, icon], i) => <CatalogRow key={i} index={i} name={name} icon={icon} />)}
      </ul>
    </aside>
  )
}

// ---------- create features pane ----------

const constructionTools = [
  ['面', <path key="p" d="M1 10l9-8 3 3 3-1 2 3-3 3 4 4-3 4-5-4-3 3z" fill="#dcefd9" stroke="#777" strokeWidth="1.200" />],
  ['自动完成面', <g key="a"><path d="M3 3h10v13H3z" fill="#dcefd9" /><path d="M11 1h8v18h-8z" fill="#f0f4f6" stroke="#aaa" /><path d="M3 3h11M3 16h11M3 3v13" stroke="#666" /><Dots points={[[3, 3], [14, 3], [3, 16], [14, 16]]} color="#555" fill="#999" size={2} /></g>],
  ['直角面', <g key="r"><path d="M2 17l8-8 8 8" fill="none" stroke="#666" strokeWidth="1.200" /><Dots points={[[2, 17], [18, 17]]} size={3} /><rect x="8" y="8" width="4" height="4" fill="#d9542c" /></g>],
  ['圆形', <circle key="c" cx="10" cy="10" r="8.500" fill="#dcefd9" stroke="#777" strokeWidth="1.200" />],
  ['矩形', <rect key="q" x="3" y="2" width="14" height="16" fill="#dcefd9" stroke="#777" strokeWidth="1.300" />],
  ['椭圆', <ellipse key="e" cx="10" cy="10" rx="9.500" ry="5.500" fill="#dcefd9" stroke="#777" strokeWidth="1.200" />],
  ['手绘', <path key="h" d="M1 3c3-3 5-1 3 2s1 5 4 1 3-3 1 1 0 8 4 9 6-2 5-4-5-2-5 2 2 5 5 5" fill="none" stroke="#777" strokeWidth="1.200" />],
  ['自动完成手绘', <g key="af"><path d="M9 1h10v18H9z" fill="#f0f4f6" stroke="#aaa" /><path d="M15 4h-4c-2 3-10 3-10 6s8 3 10 6h4" fill="none" stroke="#777" strokeWidth="1.200" /><path d="M8 6c-3 1-6 2-6 4s3 3 6 4z" fill="#dcefd9" /></g>],
  ['追踪', <g key="tr"><path d="M10 2h8v15" fill="none" stroke="#666" strokeWidth="1.200" /><path d="M10 2L1 17h17" fill="none" stroke="#c8603a" strokeWidth="1.200" /><path d="M10 14v6M7 17h6" stroke="#444" strokeWidth="1.200" /><Dots points={[[10, 2], [18, 2], [18, 17]]} size={2} /></g>],
  ['流', <g key="st"><path d="M2 8c-3-5 4-7 4-3l3 8 3 4 6 1" fill="none" stroke="#777" strokeWidth="1.200" /><Dots points={[[4, 2], [8, 4], [8, 13], [12, 17]]} size={2} /><rect x="16" y="16" width="4" height="4" fill="#d9542c" /></g>],
  ['按属性', <g key="ba"><path d="M4 8h5v11H4zM9 3h5v16H9zM14 6h5v13h-5z" fill="#eee" stroke="#888" /><path d="M12 4v14M17 8v10" stroke="#bbb" /><circle cx="5" cy="5" r="3" fill="#f8e7a0" stroke="#e2b93c" /><path d="M5 0v2M0 5h2M8 5h2M5 8v2" stroke="#e2b93c" /></g>],
  ['边界', <g key="bd"><path d="M3 4h14v12H3z" fill="#dcefd9" /><path d="M12 1h7v18H8v-9h4z" fill="#f0f4f6" stroke="#999" /><path d="M3 4h14v12H3z" fill="none" stroke="#666" strokeWidth="1.200" /><Dots points={[[3, 4], [17, 4], [3, 16], [17, 16]]} color="#555" fill="#999" size={2} /></g>],
]

function CreateFeatures() {
  const [tool, setTool] = useState('面')
  return (
    <aside className="w-[249px] shrink-0 flex flex-col bg-[#f8f8f8] border border-[#cdcdcd] border-t-6 border-t-[#c9c9c9] text-[#444]">
      <div className="h-7 flex items-center justify-between pl-1 pr-[7px]">
        <h2 className="text-[20px] leading-7 text-[#555]">创建要素</h2>
        <PaneControls sideways />
      </div>
      <div className="mt-[13px] flex items-center pl-[7px] pr-2 gap-2.5">
        <FilterIcon />
        <SearchBox label="搜索模板" inset="pl-2.5" />
        <button aria-label="管理模板" className="shrink-0 -ml-1">
          <svg {...small}>
            <path d="M1 1h14v12H1z" fill="#fff" stroke="#888" />
            <path d="M1 1h14v3H1z" fill="#4f9fd6" />
            <path d="M3 7h3M7 7h3M3 10h3" stroke="#3e6fa8" strokeWidth="1.500" />
            <path d="M9 7a2 2 0 0 1 2-2h6l2 2v12H9z" fill="#fff" stroke="#666" />
            <path d="M11 9h2M15 9h2M11 12h2M15 12h2M11 15h2M15 15h2" stroke="#7a5a9a" strokeWidth="1.500" />
          </svg>
        </button>
      </div>
      <div className="mt-2.5 pl-2 flex gap-3 text-[16px] leading-6">
        <button className="h-[27px] font-bold border-b-2 border-[#0f77bd]">模板</button>
        <button className="h-[25px]">收藏夹</button>
      </div>
      <button className="mt-[11px] pl-[7px] flex items-center gap-1 text-[16px] leading-6 font-bold text-[#0f77bd]">
        <svg width="10" height="7" viewBox="0 0 10 7"><path d="M1 1l4 4 4-4" fill="none" stroke="#0f77bd" strokeWidth="2" /></svg>
        test01
      </button>
      <div className="mt-3 h-[147px] -mx-px flex justify-between pl-[25px] pr-[15px] bg-[#e1edf5] border border-[#4a98cb]">
        <div>
          <div className="pt-2.5 pl-0.5 flex items-center gap-1.5 text-[16px] leading-6 font-bold">
            <span className="w-5 h-4 bg-[#dcfab6] border border-[#888]" />
            test01
          </div>
          <div className="mt-[3px] grid grid-cols-4 gap-x-[5px]">
            {constructionTools.map(([name, drawing]) => (
              <button
                key={name}
                aria-label={name}
                onClick={() => setTool(name)}
                className={`size-[30px] flex items-center justify-center border ${name === tool ? 'bg-[#b5d2ea] border-[#3a89c0]' : 'border-transparent'}`}
              >
                <svg {...small}>{drawing}</svg>
              </button>
            ))}
          </div>
        </div>
        <button aria-label="打开活动模板" className="self-start mt-5">
          <svg {...small}><path d="M0 10h18M10 2l8 8-8 8" fill="none" stroke="#4f9fd6" strokeWidth="2.600" /></svg>
        </button>
      </div>
      <div className="flex-1" />
      <div className="h-4 flex items-center justify-center gap-1.5 bg-[#ebebeb]">
        <span className="size-2 rounded-full bg-[#8a8a8a]" />
        <span className="size-2 rounded-full bg-[#8a8a8a]" />
        <span className="size-2 rounded-full bg-[#8a8a8a]" />
      </div>
    </aside>
  )
}

function SideTabs() {
  return (
    <nav className="w-[39px] shrink-0 flex flex-col gap-4 text-[15px] text-[#555]">
      {['修改要素', '创建要素', '符号系统'].map(name => (
        <button key={name} className="h-[59px] pl-1.5 flex items-center justify-center border-r-7 border-[#cdcdcd]">
          <span className="[writing-mode:vertical-rl] [text-orientation:sideways] leading-5 whitespace-nowrap">{name}</span>
        </button>
      ))}
    </nav>
  )
}

function Annotations() {
  return (
    <svg width="1851" height="1080" viewBox="0 0 1851 1080" className="absolute left-0 top-0 pointer-events-none">
      <path d="M98 422L386 86M523 138l1032 238" stroke="#e31616" strokeWidth="2" fill="none" />
      <path d="M394 77l-4 17-11-9zM1567 378l-15 4 3-13z" fill="#f00c0c" />
    </svg>
  )
}

export default function App() {
  return (
    <div className="relative h-screen flex overflow-hidden bg-[#f1f1f1] font-['Open_Sans','Noto_Sans_CJK_SC',sans-serif]">
      <div className="flex-1 min-w-0 flex flex-col">
        <Header />
        <Ribbon />
        <div className="flex-1 min-h-0 flex pt-[7px] pb-2 pl-[7px]">
          <Contents />
          <div className="w-2 shrink-0" />
          <MapView />
          <div className="w-[7px] shrink-0" />
          <Catalog />
          <div className="w-2 shrink-0" />
          <CreateFeatures />
          <SideTabs />
        </div>
      </div>
      <div className="w-[9px] shrink-0 flex flex-col justify-end overflow-hidden bg-linear-to-b from-[#d3d5d7] via-[#e0d6cf] via-60% to-[#d2d2d2] to-70% text-black">
        <svg width="9" height="16" viewBox="0 0 9 16" className="mb-[79px]">
          <path d="M7 1h3v3H7zM7 8h3v3H7zM7 12h3v3H7z" fill="#fff" stroke="#555" />
        </svg>
        <span className="pl-px text-[15px] leading-5 mb-[64px]">2</span>
        <span className="h-px bg-[#aaa] mb-1.5" />
      </div>
      <p className="absolute right-2 bottom-[7px] font-['Liberation_Sans',sans-serif] text-[16px] leading-5 text-white/90 [text-shadow:0_0_2px_#aaa]">
        https://blog.csdn.net/c15040311970
      </p>
      <Annotations />
    </div>
  )
}
